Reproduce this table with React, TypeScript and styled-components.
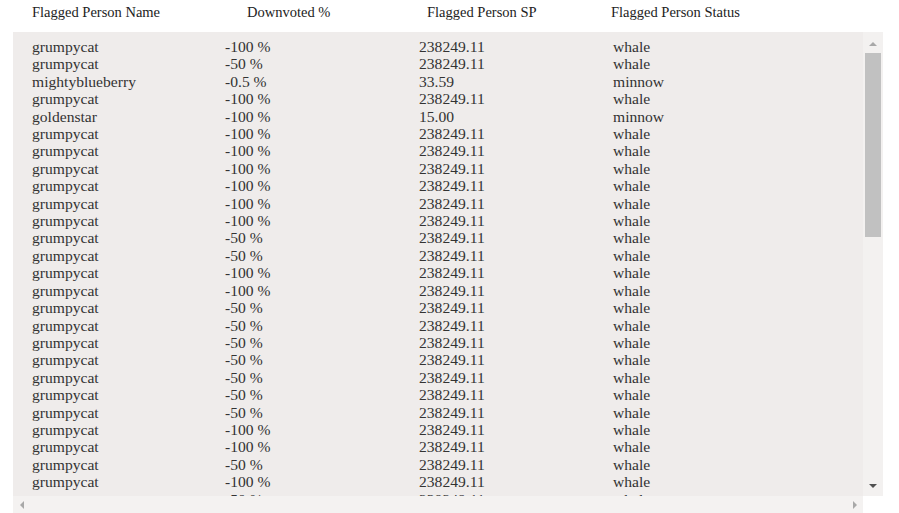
import React from "react";
import styled, { createGlobalStyle, css } from "styled-components";

const GlobalStyle = createGlobalStyle`
  html, body {
    margin: 0;
    padding: 0;
    background: #ffffff;
    overflow: hidden;
  }
  body {
    font-family: "Liberation Serif", "Times New Roman", serif;
  }
`;

const Page = styled.div`
  width: 899px;
  height: 513px;
  display: flex;
  flex-direction: column;
`;

const HeaderRow = styled.div`
  height: 32px;
  display: grid;
  grid-template-columns: 215px 180px 184px auto;
  align-items: start;
  padding: 4px 0 0 32px;
  box-sizing: border-box;
  font-size: 14.5px;
  line-height: 17px;
  color: #222;
`;

const HeaderCell = styled.div`
  white-space: nowrap;
`;

/* Scroll frame: viewport + vertical bar / horizontal bar + corner */
const ScrollFrame = styled.div`
  margin-left: 13px;
  width: 870px;
  height: 481px;
  display: grid;
  grid-template-columns: 1fr 20px;
  grid-template-rows: 1fr 17px;
  background: #efeceb;
`;

const Viewport = styled.div`
  overflow: auto;
  scrollbar-width: none;
  padding: 6px 0 0 19px;
  min-height: 0;
  &::-webkit-scrollbar {
    display: none;
  }
`;

const VBar = styled.div`
  background: #f3f1f0;
  display: flex;
  flex-direction: column;
  align-items: stretch;
  min-height: 0;
`;

const HBar = styled.div`
  background: #f4f2f1;
  display: flex;
  flex-direction: row;
  align-items: stretch;
  justify-content: space-between;
`;

const Corner = styled.div`
  background: #ffffff;
`;

const Thumb = styled.div<{ $size: number }>`
  height: ${(p) => p.$size}px;
  margin: 1px 2px 0;
  background: #c1c1c1;
`;

const Track = styled.div`
  flex: 1;
`;

type Dir = "up" | "down" | "left" | "right";

const triangle = (dir: Dir, color: string) => {
  switch (dir) {
    case "up":
      return css`
        border-left: 4px solid transparent;
        border-right: 4px solid transparent;
        border-bottom: 4px solid ${color};
      `;
    case "down":
      return css`
        border-left: 4px solid transparent;
        border-right: 4px solid transparent;
        border-top: 4px solid ${color};
      `;
    case "left":
      return css`
        border-top: 4px solid transparent;
        border-bottom: 4px solid transparent;
        border-right: 4px solid ${color};
      `;
    default:
      return css`
        border-top: 4px solid transparent;
        border-bottom: 4px solid transparent;
        border-left: 4px solid ${color};
      `;
  }
};

const ArrowButton = styled.div<{ $dir: Dir; $color: string; $vertical?: boolean }>`
  flex: none;
  width: ${(p) => (p.$vertical ? "auto" : "17px")};
  height: ${(p) => (p.$vertical ? "20px" : "auto")};
  display: flex;
  align-items: center;
  justify-content: center;
  padding-top: ${(p) => (p.$dir === "up" ? "4px" : "0")};
  box-sizing: border-box;
  &::before {
    content: "";
    width: 0;
    height: 0;
    ${(p) => triangle(p.$dir, p.$color)}
  }
`;

const Table = styled.div`
  display: flex;
  flex-direction: column;
  font-size: 15.6px;
  line-height: 17.4px;
  color: #333;
`;

const Row = styled.div`
  display: grid;
  grid-template-columns: 193px 194px 194px 190px;
`;

const Cell = styled.div`
  white-space: nowrap;
`;

type Entry = { name: string; pct: string; sp: string; status: string };

const W = (pct: string): Entry => ({
  name: "grumpycat",
  pct,
  sp: "238249.11",
  status: "whale",
});

const rows: Entry[] = [
  W("-100 %"),
  W("-50 %"),
  { name: "mightyblueberry", pct: "-0.5 %", sp: "33.59", status: "minnow" },
  W("-100 %"),
  { name: "goldenstar", pct: "-100 %", sp: "15.00", status: "minnow" },
  W("-100 %"),
  W("-100 %"),
  W("-100 %"),
  W("-100 %"),
  W("-100 %"),
  W("-100 %"),
  W("-50 %"),
  W("-50 %"),
  W("-100 %"),
  W("-100 %"),
  W("-50 %"),
  W("-50 %"),
  W("-50 %"),
  W("-50 %"),
  W("-50 %"),
  W("-50 %"),
  W("-50 %"),
  W("-100 %"),
  W("-100 %"),
  W("-50 %"),
  W("-100 %"),
  W("-50 %"),
  W("-100 %"),
  W("-50 %"),
  W("-100 %"),
  W("-100 %"),
  W("-50 %"),
  W("-100 %"),
  W("-50 %"),
  W("-50 %"),
  W("-100 %"),
  W("-100 %"),
  W("-100 %"),
  W("-50 %"),
  W("-100 %"),
  W("-50 %"),
  W("-50 %"),
  W("-100 %"),
  W("-100 %"),
  W("-50 %"),
  W("-100 %"),
  W("-100 %"),
  W("-50 %"),
  W("-50 %"),
  W("-100 %"),
  W("-100 %"),
  W("-50 %"),
  W("-100 %"),
  W("-50 %"),
  W("-100 %"),
  W("-100 %"),
  W("-50 %"),
  W("-100 %"),
  W("-50 %"),
  W("-100 %"),
  W("-100 %"),
];

export default function App() {
  return (
    <>
      <GlobalStyle />
      <Page>
        <HeaderRow>
          <HeaderCell>Flagged Person Name</HeaderCell>
          <HeaderCell>Downvoted %</HeaderCell>
          <HeaderCell>Flagged Person SP</HeaderCell>
          <HeaderCell>Flagged Person Status</HeaderCell>
        </HeaderRow>
        <ScrollFrame>
          <Viewport>
            <Table>
              {rows.map((r, i) => (
                <Row key={i}>
                  <Cell>{r.name}</Cell>
                  <Cell>{r.pct}</Cell>
                  <Cell>{r.sp}</Cell>
                  <Cell>{r.status}</Cell>
                </Row>
              ))}
            </Table>
          </Viewport>
          <VBar>
            <ArrowButton $vertical $dir="up" $color="#a8a8a8" />
            <Thumb $size={184} />
            <Track />
            <ArrowButton $vertical $dir="down" $color="#505050" />
          </VBar>
          <HBar>
            <ArrowButton $dir="left" $color="#a8a8a8" />
            <ArrowButton $dir="right" $color="#a8a8a8" />
          </HBar>
          <Corner />
        </ScrollFrame>
      </Page>
    </>
  );
}
